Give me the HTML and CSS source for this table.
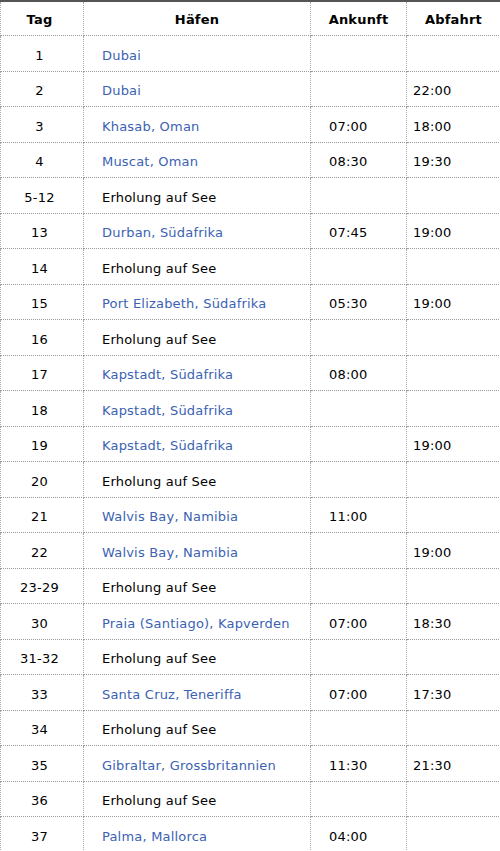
FILE: index.html
```html
<!DOCTYPE html>
<html lang="de">
<head>
<meta charset="utf-8">
<title>Route</title>
<link rel="stylesheet" href="styles.css">
</head>
<body>
<table class="route">
  <colgroup>
    <col class="c-tag">
    <col class="c-port">
    <col class="c-arr">
    <col class="c-dep">
  </colgroup>
  <thead>
    <tr><th class="day">Tag</th><th>Häfen</th><th>Ankunft</th><th>Abfahrt</th></tr>
  </thead>
  <tbody>
    <tr><td class="day">1</td><td class="port"><a href="#">Dubai</a></td><td class="arr"></td><td class="dep"></td></tr>
    <tr><td class="day">2</td><td class="port"><a href="#">Dubai</a></td><td class="arr"></td><td class="dep">22:00</td></tr>
    <tr><td class="day">3</td><td class="port"><a href="#">Khasab, Oman</a></td><td class="arr">07:00</td><td class="dep">18:00</td></tr>
    <tr><td class="day">4</td><td class="port"><a href="#">Muscat, Oman</a></td><td class="arr">08:30</td><td class="dep">19:30</td></tr>
    <tr><td class="day">5-12</td><td class="port">Erholung auf See</td><td class="arr"></td><td class="dep"></td></tr>
    <tr><td class="day">13</td><td class="port"><a href="#">Durban, Südafrika</a></td><td class="arr">07:45</td><td class="dep">19:00</td></tr>
    <tr><td class="day">14</td><td class="port">Erholung auf See</td><td class="arr"></td><td class="dep"></td></tr>
    <tr><td class="day">15</td><td class="port"><a href="#">Port Elizabeth, Südafrika</a></td><td class="arr">05:30</td><td class="dep">19:00</td></tr>
    <tr><td class="day">16</td><td class="port">Erholung auf See</td><td class="arr"></td><td class="dep"></td></tr>
    <tr><td class="day">17</td><td class="port"><a href="#">Kapstadt, Südafrika</a></td><td class="arr">08:00</td><td class="dep"></td></tr>
    <tr><td class="day">18</td><td class="port"><a href="#">Kapstadt, Südafrika</a></td><td class="arr"></td><td class="dep"></td></tr>
    <tr><td class="day">19</td><td class="port"><a href="#">Kapstadt, Südafrika</a></td><td class="arr"></td><td class="dep">19:00</td></tr>
    <tr><td class="day">20</td><td class="port">Erholung auf See</td><td class="arr"></td><td class="dep"></td></tr>
    <tr><td class="day">21</td><td class="port"><a href="#">Walvis Bay, Namibia</a></td><td class="arr">11:00</td><td class="dep"></td></tr>
    <tr><td class="day">22</td><td class="port"><a href="#">Walvis Bay, Namibia</a></td><td class="arr"></td><td class="dep">19:00</td></tr>
    <tr><td class="day">23-29</td><td class="port">Erholung auf See</td><td class="arr"></td><td class="dep"></td></tr>
    <tr><td class="day">30</td><td class="port"><a href="#">Praia (Santiago), Kapverden</a></td><td class="arr">07:00</td><td class="dep">18:30</td></tr>
    <tr><td class="day">31-32</td><td class="port">Erholung auf See</td><td class="arr"></td><td class="dep"></td></tr>
    <tr><td class="day">33</td><td class="port"><a href="#">Santa Cruz, Teneriffa</a></td><td class="arr">07:00</td><td class="dep">17:30</td></tr>
    <tr><td class="day">34</td><td class="port">Erholung auf See</td><td class="arr"></td><td class="dep"></td></tr>
    <tr><td class="day">35</td><td class="port"><a href="#">Gibraltar, Grossbritannien</a></td><td class="arr">11:30</td><td class="dep">21:30</td></tr>
    <tr><td class="day">36</td><td class="port">Erholung auf See</td><td class="arr"></td><td class="dep"></td></tr>
    <tr><td class="day">37</td><td class="port"><a href="#">Palma, Mallorca</a></td><td class="arr">04:00</td><td class="dep"></td></tr>
  </tbody>
</table>
</body>
</html>
```
FILE: styles.css
```css
html, body {
  margin: 0;
  padding: 0;
  background: #fff;
}

body {
  font-family: "DejaVu Sans", Verdana, sans-serif;
  font-size: 13px;
  letter-spacing: 0.2px;
  color: #000;
}

.route {
  width: 500px;
  border-collapse: collapse;
  table-layout: fixed;
  border-top: 2px solid #555;
  border-bottom: 2px solid #555;
}

.c-tag { width: 83px; }
.c-port { width: 227px; }
.c-arr { width: 96px; }
.c-dep { width: 94px; }

.route th,
.route td {
  border-left: 1px dotted #aaa;
  border-right: 1px dotted #aaa;
  border-bottom: 1px dotted #9a9a9a;
  padding: 0;
  line-height: 16px;
  vertical-align: middle;
}

.route th {
  height: 31px;
  padding-top: 2px;
  font-weight: bold;
  text-align: center;
}

.route td {
  height: 29.5px;
  padding-top: 5px;
}

.route .day {
  text-align: center;
  padding-right: 5px;
}

.route td.port {
  padding-left: 18px;
}

.route td.arr {
  padding-left: 18px;
}

.route td.dep {
  padding-left: 6px;
}

.route tbody tr:last-child td {
  border-bottom: none;
}

.route a {
  color: #3b62b3;
  text-decoration: none;
}
```
